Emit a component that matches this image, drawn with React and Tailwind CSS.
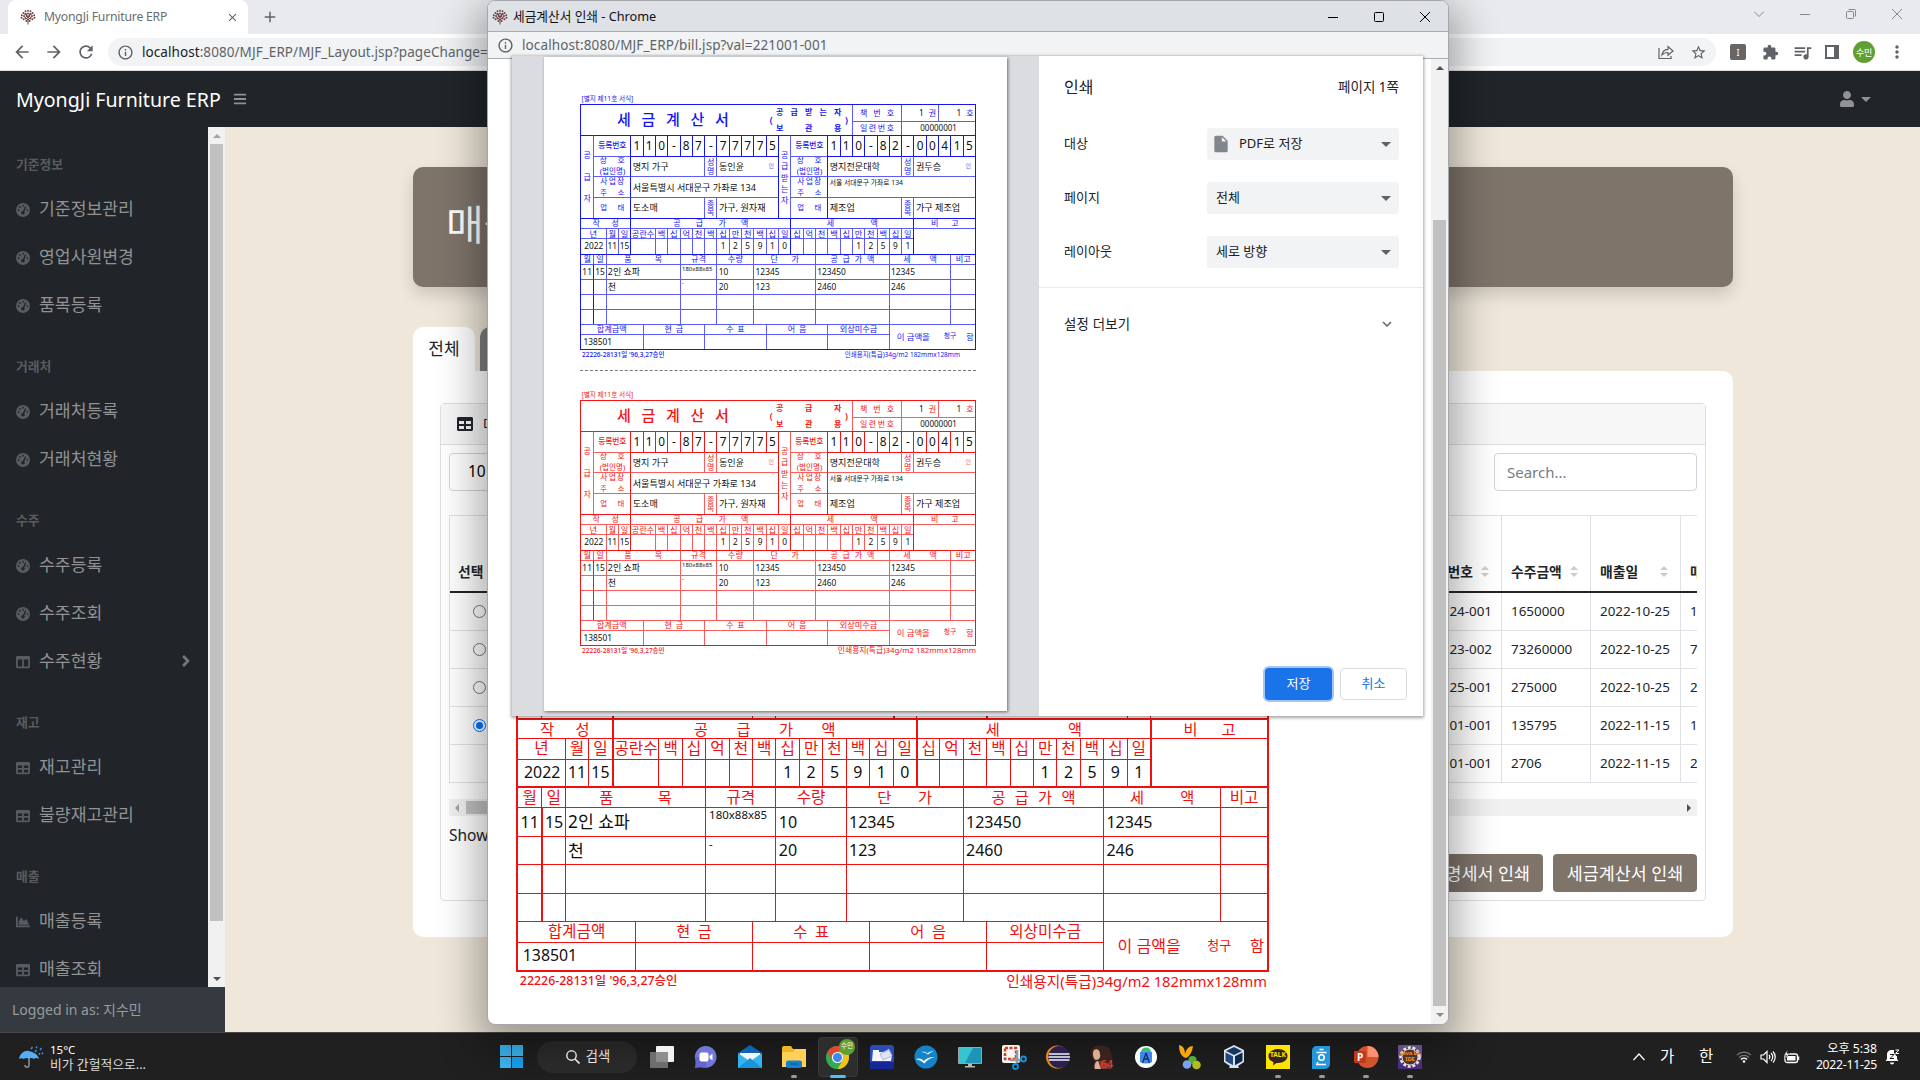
import React from "react";
import { FaBars, FaChartArea, FaColumns, FaTable, FaUser, FaAngleRight } from "react-icons/fa";
import { FaGaugeHigh } from "react-icons/fa6";
import { MdExtension, MdMoreVert, MdQueueMusic, MdStarBorder, MdArrowBack, MdArrowForward, MdRefresh, MdInfoOutline, MdClose, MdAdd, MdInsertDriveFile, MdExpandMore } from "react-icons/md";

const FONT = "font-['Noto_Sans','Noto_Sans_CJK_KR',sans-serif]";

/* ---------- tax invoice form ---------- */

// Relative row heights of the form; columns are 32 units, each split in halves.
const PRINT_ROWS = [1.6, 1.4, 2.1, 2.1, 2.1, 2.07, 1.03, 1.05, 1.55, 1.03, 1.5, 1.5, 1.51, 1.49, 1.04, 1.53];
const SCREEN_ROWS = [1.6, 1.4, 2.1, 2.1, 2.1, 2.02, 1.06, 1.06, 1.46, 1.1, 1.5, 1.5, 1.5, 1.5, 1.07, 1.47];

function Cell({ c, r, className = "", thickL, thickT, children }) {
  const line = [
    c[0] > 0 ? (thickL ? "[border-left-width:var(--thick)] border-l-current" : "border-l border-l-(--line)") : "",
    r[0] > 0 ? (thickT ? "[border-top-width:var(--thick)] border-t-current" : "border-t border-t-(--line)") : "",
  ].join(" ");
  return (
    <div
      className={`flex min-h-0 min-w-0 items-center overflow-hidden whitespace-nowrap ${line} ${className}`}
      style={{ gridColumn: `${c[0] * 2 + 1} / ${c[1] * 2 + 1}`, gridRow: `${r[0] + 1} / ${r[1] + 1}` }}
    >
      {children}
    </div>
  );
}

function Spread({ text, size = "text-[0.8em]", className = "" }) {
  return (
    <span className={`flex flex-1 justify-between leading-none ${size} ${className}`}>
      {[...text].map((ch, i) => (
        <span key={i}>{ch}</span>
      ))}
    </span>
  );
}

function Label({ text, size = "text-[0.82em]" }) {
  return <span className={`flex-1 text-center leading-none ${size}`}>{text}</span>;
}

function Val({ children, size = "text-[0.83em]", className = "" }) {
  return <span className={`leading-none text-[#111] ${size} ${className}`}>{children}</span>;
}

function Stack({ text, className = "" }) {
  return (
    <div className={`flex h-full flex-1 flex-col items-center justify-between ${className}`}>
      {[...text].map((ch, i) => (
        <span key={i} className="text-[0.8em] leading-none">{ch}</span>
      ))}
    </div>
  );
}

function Party({ x, side, digits, name, ceo, addr, smallAddr, biz, kind }) {
  return (
    <>
      <Cell c={[x, x + 1]} r={[2, 6]} thickT thickL>
        <Stack text={side} className={side.length === 3 ? "py-[1.55em]" : "pt-[1.55em] pb-[1.4em]"} />
      </Cell>
      <Cell c={[x + 1, x + 4]} r={[2, 3]} thickT>
        <Label text="등록번호" size="text-[0.77em] font-medium" />
      </Cell>
      {[...digits].map((d, i) => (
        <Cell key={i} c={[x + 4 + i, x + 5 + i]} r={[2, 3]} thickT thickL>
          <Val size="text-[1.18em]" className="flex-1 text-center">{d}</Val>
        </Cell>
      ))}
      <Cell c={[x + 1, x + 4]} r={[3, 4]} className="flex-col justify-center gap-[0.3em] px-[0.55em]">
        <div className="flex w-full"><Spread text="상호" size="text-[0.78em]" /></div>
        <div className="flex w-full"><Label text="(법인명)" size="text-[0.76em]" /></div>
      </Cell>
      <Cell c={[x + 4, x + 10]} r={[3, 4]} thickT thickL className="pl-[0.15em]"><Val size="text-[0.91em]">{name}</Val></Cell>
      <Cell c={[x + 10, x + 11]} r={[3, 4]} thickT><Stack text="성명" className="py-[0.15em]" /></Cell>
      <Cell c={[x + 11, x + 16]} r={[3, 4]} thickT className="justify-between pr-[0.4em] pl-[0.15em]">
        <Val size="text-[0.91em]">{ceo}</Val>
        <span className="text-[0.6em] leading-none opacity-70">인</span>
      </Cell>
      <Cell c={[x + 1, x + 4]} r={[4, 5]} className="flex-col justify-center gap-[0.3em] px-[0.6em]">
        <div className="flex w-full"><Spread text="사업장" size="text-[0.78em]" /></div>
        <div className="flex w-full"><Spread text="주소" size="text-[0.72em]" /></div>
      </Cell>
      <Cell c={[x + 4, x + 16]} r={[4, 5]} thickL className={smallAddr ? "items-start pt-[0.3em] pl-[0.15em]" : "pl-[0.15em]"}>
        <Val size={smallAddr ? "text-[0.68em]" : "text-[0.91em]"}>{addr}</Val>
      </Cell>
      <Cell c={[x + 1, x + 4]} r={[5, 6]} className="px-[0.6em]"><Spread text="업태" size="text-[0.74em]" /></Cell>
      <Cell c={[x + 4, x + 10]} r={[5, 6]} thickL className="pl-[0.15em]"><Val size="text-[0.91em]">{biz}</Val></Cell>
      <Cell c={[x + 10, x + 11]} r={[5, 6]}><Stack text="종목" className="py-[0.15em]" /></Cell>
      <Cell c={[x + 11, x + 16]} r={[5, 6]} className="pl-[0.15em]"><Val size="text-[0.91em]">{kind}</Val></Cell>
    </>
  );
}

const ITEMS = [
  ["11", "15", "2인 쇼파", "180x88x85", "10", "12345", "123450", "12345"],
  ["", "", "천", "-", "20", "123", "2460", "246"],
  ["", "", "", "", "", "", "", ""],
  ["", "", "", "", "", "", "", ""],
];
const ITEM_COLS = [[0, 1], [1, 2], [2, 8], [8, 11], [11, 14], [14, 19], [19, 25], [25, 30]];

function itemSize(col) {
  if (col === 3) return "text-[0.6em]";
  return col === 2 ? "text-[0.9em]" : "text-[0.84em]";
}

function Bill({ copy, className, rows = PRINT_ROWS, footRight = "text-[0.77em]" }) {
  const units1 = "백십억천백십만천백십일";
  const amount1 = "     125910";
  const units2 = "십억천백십만천백십일";
  const amount2 = "     12591";
  return (
    <div className={className}>
      <div className="flex h-[0.9em] items-center pl-[0.15em]"><span className="text-[0.66em] leading-none whitespace-pre">[별지 제11호 서식]</span></div>
      <div
        className="grid h-[24.6em] grid-cols-[repeat(64,minmax(0,1fr))] border-current [border-width:var(--thick)]"
        style={{ gridTemplateRows: rows.map((h) => `minmax(0, ${h}fr)`).join(" ") }}
      >
        <Cell c={[0, 15]} r={[0, 2]} className="pr-[3.7em] pl-[3.6em]"><Spread text="세금계산서" size="text-[1.5em] font-medium" /></Cell>
        <Cell c={[15, 22]} r={[0, 2]} className="gap-[0.35em] border-l-0 pr-[0.4em] pl-[0.4em] font-semibold">
          <span className="text-[0.9em]">(</span>
          <div className="flex flex-1 flex-col gap-[0.75em]">
            <div className="flex"><Spread text={copy} size="text-[0.8em]" /></div>
            <div className="flex"><Spread text="보관용" size="text-[0.8em]" /></div>
          </div>
          <span className="text-[0.9em]">)</span>
        </Cell>
        <Cell c={[22, 26]} r={[0, 1]} className="px-[0.7em]"><Spread text="책번호" size="text-[0.8em]" /></Cell>
        <Cell c={[26, 29]} r={[0, 1]} className="justify-end gap-[0.5em] pr-[0.2em]"><Val>1</Val><span className="text-[0.8em]">권</span></Cell>
        <Cell c={[29, 32]} r={[0, 1]} className="justify-end gap-[0.5em] pr-[0.15em]"><Val>1</Val><span className="text-[0.8em]">호</span></Cell>
        <Cell c={[22, 26]} r={[1, 2]} className="px-[0.7em]"><Spread text="일련번호" size="text-[0.8em]" /></Cell>
        <Cell c={[26, 32]} r={[1, 2]}><Val size="text-[0.8em]" className="flex-1 text-center">00000001</Val></Cell>

        <Party x={0} side="공급자" digits="110-87-77775" name="명지 가구" ceo="동인윤" addr="서울특별시 서대문구 가좌로 134" biz="도소매" kind="가구, 원자재" />
        <Party x={16} side="공급받는자" digits="110-82-00415" name="명지전문대학" ceo="권두승" addr="서울 서대문구 가좌로 134" smallAddr biz="제조업" kind="가구 제조업" />

        <Cell c={[0, 4]} r={[6, 7]} thickT className="px-[1.15em]"><Spread text="작성" /></Cell>
        <Cell c={[4, 17]} r={[6, 7]} thickT thickL className="px-[4.2em]"><Spread text="공급가액" /></Cell>
        <Cell c={[17, 27]} r={[6, 7]} thickT thickL className="px-[3.55em]"><Spread text="세액" /></Cell>
        <Cell c={[27, 32]} r={[6, 7]} thickT thickL className="px-[1.65em]"><Spread text="비고" /></Cell>
        <Cell c={[0, 2]} r={[7, 8]}><Label text="년" /></Cell>
        <Cell c={[2, 3]} r={[7, 8]}><Label text="월" /></Cell>
        <Cell c={[3, 4]} r={[7, 8]}><Label text="일" /></Cell>
        <Cell c={[4, 6]} r={[7, 8]} thickL><Label text="공란수" /></Cell>
        <Cell c={[0, 2]} r={[8, 9]}><Val className="flex-1 pl-[0.1em] text-center">2022</Val></Cell>
        <Cell c={[2, 3]} r={[8, 9]}><Val className="flex-1 text-center">11</Val></Cell>
        <Cell c={[3, 4]} r={[8, 9]}><Val className="flex-1 text-center">15</Val></Cell>
        <Cell c={[4, 6]} r={[8, 9]} thickL />
        {[...units1].map((u, i) => (
          <React.Fragment key={i}>
            <Cell c={[6 + i, 7 + i]} r={[7, 8]}><Label text={u} /></Cell>
            <Cell c={[6 + i, 7 + i]} r={[8, 9]}><Val className="flex-1 text-center">{amount1[i]}</Val></Cell>
          </React.Fragment>
        ))}
        {[...units2].map((u, i) => (
          <React.Fragment key={i}>
            <Cell c={[17 + i, 18 + i]} r={[7, 8]} thickL={i === 0}><Label text={u} /></Cell>
            <Cell c={[17 + i, 18 + i]} r={[8, 9]} thickL={i === 0}><Val className="flex-1 text-center">{amount2[i]}</Val></Cell>
          </React.Fragment>
        ))}
        <Cell c={[27, 32]} r={[7, 9]} thickL />

        <Cell c={[0, 1]} r={[9, 10]} thickT><Label text="월" /></Cell>
        <Cell c={[1, 2]} r={[9, 10]} thickT><Label text="일" /></Cell>
        <Cell c={[2, 8]} r={[9, 10]} thickT className="px-[1.75em]"><Spread text="품목" /></Cell>
        <Cell c={[8, 11]} r={[9, 10]} thickT><Label text="규격" /></Cell>
        <Cell c={[11, 14]} r={[9, 10]} thickT><Label text="수량" /></Cell>
        <Cell c={[14, 19]} r={[9, 10]} thickT className="px-[1.6em]"><Spread text="단가" /></Cell>
        <Cell c={[19, 25]} r={[9, 10]} thickT className="px-[1.45em]"><Spread text="공급가액" /></Cell>
        <Cell c={[25, 30]} r={[9, 10]} thickT className="px-[1.35em]"><Spread text="세액" /></Cell>
        <Cell c={[30, 32]} r={[9, 10]} thickT><Label text="비고" /></Cell>
        {ITEMS.map((item, ri) => (
          <React.Fragment key={ri}>
            {item.map((v, ci) => (
              <Cell
                key={ci}
                c={ITEM_COLS[ci]}
                r={[10 + ri, 11 + ri]}
                thickL={ci === 1}
                className={ci === 3 ? "items-start pt-[0.06em] pl-[0.15em]" : ci < 2 ? "justify-center" : "pl-[0.12em]"}
              >
                <Val size={itemSize(ci)}>{v}</Val>
              </Cell>
            ))}
            <Cell c={[30, 32]} r={[10 + ri, 11 + ri]} />
          </React.Fragment>
        ))}

        <Cell c={[0, 5]} r={[14, 15]}><Label text="합계금액" /></Cell>
        <Cell c={[5, 10]} r={[14, 15]} className="px-[2.1em]"><Spread text="현금" /></Cell>
        <Cell c={[10, 15]} r={[14, 15]} className="px-[2.1em]"><Spread text="수표" /></Cell>
        <Cell c={[15, 20]} r={[14, 15]} className="px-[2.1em]"><Spread text="어음" /></Cell>
        <Cell c={[20, 25]} r={[14, 15]}><Label text="외상미수금" /></Cell>
        <Cell c={[25, 32]} r={[14, 16]} className="justify-between pr-[0.15em] pl-[0.7em]">
          <span className="text-[0.84em] leading-none">이 금액을</span>
          <span className="pl-[0.6em] text-[0.68em] leading-none">청구</span>
          <span className="text-[0.8em] leading-none">함</span>
        </Cell>
        <Cell c={[0, 5]} r={[15, 16]} className="pl-[0.25em]"><Val>138501</Val></Cell>
        <Cell c={[5, 10]} r={[15, 16]} />
        <Cell c={[10, 15]} r={[15, 16]} />
        <Cell c={[15, 20]} r={[15, 16]} />
        <Cell c={[20, 25]} r={[15, 16]} />
      </div>
      <div className="flex h-[1em] items-center justify-between pl-[0.2em] whitespace-nowrap">
        <span className="text-[0.65em] leading-none font-medium">22226-28131일 '96,3,27승인</span>
        <span className={`leading-none ${footRight}`}>인쇄용지(특급)34g/m2 182mmx128mm</span>
      </div>
    </div>
  );
}

/* ---------- small pieces ---------- */

function Tree() {
  return (
    <svg viewBox="0 0 16 16" className="h-4 w-4 shrink-0">
      <path d="M8 15.500V8M8 11 4 7.500M8 11l4-3.500M8 9 6 4M8 9l2.200-5" stroke="#6b4242" strokeWidth="1" fill="none" />
      <g fill="#6b3e40">
        {[[8, 1.8], [5.500, 2.200], [10.500, 2.200], [3.400, 4], [12.600, 4], [1.800, 6.300], [14.200, 6.300], [1.600, 8.800], [14.400, 8.800], [3.600, 10.300], [12.400, 10.300], [5.200, 5], [10.800, 5], [8, 4.500], [4, 7], [12, 7], [6.500, 7], [9.500, 7], [5.600, 9.400], [10.400, 9.400], [6.400, 12], [9.600, 12]].map(([x, y], i) => (
          <circle key={i} cx={x} cy={y} r="0.950" />
        ))}
      </g>
    </svg>
  );
}

function Tri({ dir, className = "" }) {
  const d = { up: "M4 2 8 6H0Z", down: "M0 2h8L4 6Z", left: "M2 4 6 0v8Z", right: "M6 4 2 0v8Z" }[dir];
  return <svg viewBox="0 0 8 8" className={`h-2 w-2 ${className}`}><path d={d} fill="currentColor" /></svg>;
}

const NAV = [
  ["기준정보", [[FaGaugeHigh, "기준정보관리"], [FaGaugeHigh, "영업사원변경"], [FaGaugeHigh, "품목등록"]]],
  ["거래처", [[FaGaugeHigh, "거래처등록"], [FaGaugeHigh, "거래처현황"]]],
  ["수주", [[FaGaugeHigh, "수주등록"], [FaGaugeHigh, "수주조회"], [FaColumns, "수주현황", true]]],
  ["재고", [[FaTable, "재고관리"], [FaTable, "불량재고관리"]]],
  ["매출", [[FaChartArea, "매출등록"], [FaTable, "매출조회"]]],
];

function Sidebar() {
  return (
    <aside className="flex w-[225px] shrink-0 flex-col bg-[#212529]">
      <div className="flex h-[860px]">
        <nav className="w-[208px] overflow-hidden">
          {NAV.map(([head, items]) => (
            <div key={head}>
              <div className="flex h-[58px] items-end px-4 pb-3 text-[12.800px] leading-[18px] font-bold text-[#595c5f]">{head}</div>
              {items.map(([Icon, label, more]) => (
                <div key={label} className="flex h-12 items-center pr-[13px] pl-4 text-[17.200px] text-[#909294]">
                  <Icon className="mt-0.5 mr-[9px] h-[14px] w-[14px] text-[#595c5f]" />
                  <span className="flex-1">{label}</span>
                  {more && <FaAngleRight className="h-[18px] w-[18px] text-[#74777a]" />}
                </div>
              ))}
            </div>
          ))}
        </nav>
        <div className="flex w-[17px] flex-col items-center bg-[#f1f1f1] text-[#a3a3a3]">
          <div className="flex h-[17px] items-center"><Tri dir="up" /></div>
          <div className="h-[777px] w-[13px] bg-[#c1c1c1]" />
          <div className="mt-auto flex h-[17px] items-center text-[#505050]"><Tri dir="down" /></div>
        </div>
      </div>
      <div className="flex flex-1 items-center bg-[#343a40] pl-3 text-[14px] text-[#999c9f]">Logged in as: 지수민</div>
    </aside>
  );
}

const ROWS_DATA = [
  ["24-001", "1650000", "2022-10-25", "1650000"],
  ["23-002", "73260000", "2022-10-25", "73260000"],
  ["25-001", "275000", "2022-10-25", "275000"],
  ["01-001", "135795", "2022-11-15", "135795"],
  ["01-001", "2706", "2022-11-15", "2706"],
];

function Sorter() {
  return (
    <span className="flex flex-col gap-[3px] text-[#ccc]">
      <svg viewBox="0 0 8 4" className="h-1 w-2"><path d="M4 0 8 4H0Z" fill="currentColor" /></svg>
      <svg viewBox="0 0 8 4" className="h-1 w-2"><path d="M0 0h8L4 4Z" fill="currentColor" /></svg>
    </span>
  );
}

function DataTable() {
  const cols = "grid grid-cols-[120px_932px_89px_90px_90px]";
  return (
    <div className="w-[1248px] overflow-hidden">
      <div className="w-[1322px] border-t border-l border-[#dee2e6] text-[13.400px] text-[#212529]">
        <div className={`${cols} h-[77px] border-b-2 border-[#212529] text-[13.800px] font-semibold`}>
          <div className="flex items-end border-r border-[#dee2e6] pb-2 pl-2">선택</div>
          <div className="flex items-end justify-end gap-2 border-r border-[#dee2e6] pr-3 pb-2">수주번호<span className="pb-1.5"><Sorter /></span></div>
          {["수주금액", "매출일", "매출금액"].map((t) => (
            <div key={t} className="flex items-end justify-between border-r border-[#dee2e6] pr-3 pb-2 pl-[9px]">{t}<span className="pb-1.5"><Sorter /></span></div>
          ))}
        </div>
        {ROWS_DATA.map((row, i) => (
          <div key={i} className={`${cols} h-[38px] border-b border-[#dee2e6]`}>
            <div className="flex items-center border-r border-[#dee2e6] pl-[23px]">
              {i < 4 && (
                <span className={`flex h-[13px] w-[13px] items-center justify-center rounded-full border ${i === 3 ? "border-[#0075ff]" : "border-[#767676]"}`}>
                  {i === 3 && <span className="h-[7px] w-[7px] rounded-full bg-[#0075ff]" />}
                </span>
              )}
            </div>
            <div className="flex items-center justify-end border-r border-[#dee2e6] pr-[9px]">{row[0]}</div>
            {row.slice(1).map((v, j) => (
              <div key={j} className="flex items-center border-r border-[#dee2e6] pl-[9px]">{v}</div>
            ))}
          </div>
        ))}
      </div>
    </div>
  );
}

function MainContent() {
  return (
    <main className="flex-1 bg-[#efe7da] pt-10 pl-[188px]">
      <div className="flex h-[120px] w-[1320px] items-center rounded-[10px] bg-[#7e746a] pb-1 pl-[33px] text-[41px] text-white shadow-[0_8px_16px_rgba(0,0,0,0.15)]">매출조회</div>
      <div className="mt-10 flex h-11 gap-[5px]">
        <div className="flex w-[62px] items-center justify-center rounded-t-[10px] bg-white text-[17px] text-[#212529]">전체</div>
        <div className="w-[90px] rounded-t-[10px] bg-[#7f7f7f]" />
      </div>
      <div className="h-[566px] w-[1320px] rounded-[10px] rounded-tl-none bg-white px-[27px] pt-8">
        <div className="flex h-[498px] flex-col rounded-[4px] border border-[#dfdfdf]">
          <div className="flex h-[41px] items-center gap-2.5 border-b border-[#dfdfdf] bg-[#f7f7f7] pl-4 text-[15px] text-[#212529]"><FaTable className="h-4 w-4" />매출조회</div>
          <div className="flex-1 px-2 pt-2">
            <div className="flex justify-between">
              <div className="flex h-[38px] w-[70px] items-center rounded-[4px] border border-[#ced4da] pl-[18px] text-[15.500px]">10</div>
              <div className="flex h-[38px] w-[203px] items-center rounded-[4px] border border-[#ced4da] pl-3 text-[15px] text-[#757c83]">Search...</div>
            </div>
            <div className="mt-6"><DataTable /></div>
            <div className="mt-4 flex h-[17px] items-center justify-between bg-[#f1f1f1] px-1">
              <Tri dir="left" className="text-[#a3a3a3]" />
              <div className="mr-auto ml-[5px] h-[13px] w-[700px] bg-[#c1c1c1]" />
              <Tri dir="right" className="text-[#505050]" />
            </div>
            <div className="mt-2 text-[15.500px] text-[#212529]">Showing 1 to 5 of 5 entries</div>
            <div className="mt-[7px] flex justify-end gap-2.5 text-[17.400px] text-white">
              <div className="flex h-[38px] w-[150px] items-center justify-end rounded-[4px] bg-[#7e746a] pr-[13px] whitespace-nowrap">거래명세서 인쇄</div>
              <div className="flex h-[38px] w-[144px] items-center justify-center rounded-[4px] bg-[#7e746a] whitespace-nowrap">세금계산서 인쇄</div>
            </div>
          </div>
        </div>
      </div>
    </main>
  );
}

function BrowserChrome() {
  return (
    <>
      <div className="flex h-[34px] bg-[#e8eaed] pl-2">
        <div className="flex w-[240px] items-center rounded-t-lg bg-white pr-[9px] pl-3 text-[12.200px] text-[#6a6d71]">
          <Tree />
          <span className="ml-2 flex-1 tracking-[-0.2px]">MyongJi Furniture ERP</span>
          <MdClose className="h-[13px] w-[13px] text-[#5f6368]" />
        </div>
        <MdAdd className="mt-2 ml-[13px] h-[18px] w-[18px] text-[#5f6368]" />
        <div className="mt-[9px] ml-auto flex items-start gap-9 pr-[18px] text-[#85878a]">
          <svg viewBox="0 0 10 10" className="h-2.5 w-2.5"><path d="m0 2.500 5 5 5-5" fill="none" stroke="currentColor" /></svg>
          <svg viewBox="0 0 10 10" className="h-2.5 w-2.5"><path d="M0 5.500h10" stroke="currentColor" /></svg>
          <svg viewBox="0 0 10 10" className="h-2.5 w-2.5"><rect x="0.500" y="2.500" width="7" height="7" rx="1" fill="none" stroke="currentColor" /><path d="M2.500.5H8.500a1 1 0 0 1 1 1v6" fill="none" stroke="currentColor" /></svg>
          <svg viewBox="0 0 10 10" className="h-2.5 w-2.5"><path d="m0 0 10 10M10 0 0 10" stroke="currentColor" /></svg>
        </div>
      </div>
      <div className="flex h-[37px] items-center border-b border-[#dadce0] bg-white pl-3 text-[#5f6368]">
        <MdArrowBack className="h-5 w-5" />
        <MdArrowForward className="ml-3 h-5 w-5" />
        <MdRefresh className="ml-3 h-5 w-5" />
        <div className="ml-3 flex h-7 w-[1608px] items-center rounded-full bg-[#f1f3f4] pr-[9px] pl-[9px]">
          <MdInfoOutline className="h-[17px] w-[17px]" />
          <span className="ml-2 flex-1 text-[13.500px] tracking-[0.07px]"><span className="text-[#202124]">localhost</span>:8080/MJF_ERP/MJF_Layout.jsp?pageChange=</span>
          <svg viewBox="0 0 16 16" className="h-4 w-4"><path d="M1 4v10.500h12V12M4 11c.3-4 2.500-5.500 6-5.700V2.500L15 7l-5 4.200V8.500C7.500 8.500 5.500 9 4 11Z" fill="none" stroke="currentColor" strokeWidth="1.200" /></svg>
          <MdStarBorder className="ml-4 h-[17px] w-[17px]" />
        </div>
        <div className="ml-3.5 flex h-4 w-4 items-center justify-center rounded-[2px] bg-[#666] text-[9px] leading-none text-white">I</div>
        <MdExtension className="ml-4 h-[17px] w-[17px]" />
        <MdQueueMusic className="ml-[13px] h-[21px] w-[21px]" />
        <svg viewBox="0 0 14 14" className="ml-3 h-3.5 w-3.5"><path d="M0 0h14v14H0zM2 2v10h7V2z" fill="currentColor" fillRule="evenodd" /></svg>
        <div className="ml-3.5 flex h-[22px] w-[22px] items-center justify-center rounded-full bg-[#5f9f36] text-[9px] leading-none tracking-[-0.300px] text-white">수민</div>
        <MdMoreVert className="ml-3 h-5 w-5" />
      </div>
    </>
  );
}

/* ---------- print popup ---------- */

function Select({ label, value, icon }) {
  return (
    <div className="flex h-8 items-center justify-between">
      <span>{label}</span>
      <div className="flex h-8 w-[192px] items-center rounded-[3px] bg-[#f1f3f4] pr-[3px] pl-[9px]">
        {icon && <MdInsertDriveFile className="mr-2 -ml-[5px] h-5 w-5 text-[#80868b]" />}
        <span className="flex-1">{value}</span>
        <svg viewBox="0 0 10 5" className="mr-[5px] h-[5px] w-2.5 text-[#5f6368]"><path d="M0 0h10L5 5Z" fill="currentColor" /></svg>
      </div>
    </div>
  );
}

function PrintDialog() {
  return (
    <div className="absolute top-[55px] left-6 flex h-[660px] w-[911px] bg-white shadow-[0_1px_3px_1px_rgba(0,0,0,0.35)]">
      <div className="w-[527px] bg-[#dadce0] pt-px pl-8">
        <div className="h-[654px] w-[463px] bg-white pt-[38px] pl-9 shadow-[1px_1px_3px_rgba(0,0,0,0.5)]">
          <Bill copy="공급받는자" className="w-[396px] text-[10px] text-[#1414f5] [--line:#5c5cfb] [--thick:1px]" footRight="pr-4 text-[0.65em]" />
          <div className="mt-[10px] mb-[20px] w-[396px] border-t border-dashed border-[#777]" />
          <Bill copy="공급자" className="w-[396px] text-[10px] text-[#f51414] [--line:#fb5c5c] [--thick:1px]" footRight="text-[0.78em]" />
        </div>
      </div>
      <div className="flex w-96 flex-col text-[13px] text-[#202124]">
        <div className="flex h-[61px] items-center justify-between pt-px pr-6 pl-[25px]">
          <span className="text-[16px]">인쇄</span>
          <span className="text-[13.500px]">페이지 1쪽</span>
        </div>
        <div className="flex flex-col gap-[22px] border-b border-[#e8eaed] pt-[11px] pr-6 pb-[19px] pl-[25px]">
          <Select label="대상" value="PDF로 저장" icon />
          <Select label="페이지" value="전체" />
          <Select label="레이아웃" value="세로 방향" />
        </div>
        <div className="flex h-[72px] items-center justify-between pr-[27px] pl-[25px]">
          <span className="text-[13.400px] tracking-[0.2px]">설정 더보기</span>
          <MdExpandMore className="h-[18px] w-[18px] text-[#5f6368]" />
        </div>
        <div className="mt-auto flex justify-end gap-2 pr-4 pb-4">
          <div className="flex h-8 w-[67px] items-center justify-center rounded-[4px] bg-[#1a73e8] text-white ring-2 ring-[#a3c7f6]">저장</div>
          <div className="flex h-8 w-[67px] items-center justify-center rounded-[4px] border border-[#dadce0] text-[#1a73e8]">취소</div>
        </div>
      </div>
    </div>
  );
}

function Popup() {
  return (
    <div className="absolute top-0 left-[487px] flex h-[1025px] w-[962px] flex-col overflow-hidden rounded-lg border border-[#a5a7aa] bg-white shadow-[0_16px_40px_10px_rgba(0,0,0,0.33)]">
      <div className="flex h-[31px] shrink-0 items-center border-b border-[#a9acb0] bg-[#dee1e6] pt-px pr-[18px] pl-1 text-[12.700px] text-[#111]">
        <Tree />
        <span className="ml-[5px] flex-1">세금계산서 인쇄 - Chrome</span>
        <div className="flex gap-9 text-black">
          <svg viewBox="0 0 10 10" className="h-2.5 w-2.5"><path d="M0 5.500h10" stroke="currentColor" /></svg>
          <svg viewBox="0 0 10 10" className="h-2.5 w-2.5"><rect x="0.500" y="0.500" width="9" height="9" rx="1" fill="none" stroke="currentColor" /></svg>
          <svg viewBox="0 0 10 10" className="h-2.5 w-2.5"><path d="m0 0 10 10M10 0 0 10" stroke="currentColor" /></svg>
        </div>
      </div>
      <div className="flex h-[27px] shrink-0 items-center border-b border-[#a9acb0] bg-[#f1f3f4] pl-[9px] text-[13.500px] text-[#5f6368]">
        <MdInfoOutline className="h-[17px] w-[17px]" />
        <span className="ml-2 tracking-[0.11px]">localhost:8080/MJF_ERP/bill.jsp?val=221001-001</span>
      </div>
      <div className="flex min-h-0 flex-1 justify-between">
        <div className="overflow-hidden pt-[425px] pl-7">
          <Bill copy="공급자" rows={SCREEN_ROWS} className="w-[753px] text-[19.120px] text-[#f01010] [--line:#f01010] [--thick:2px]" footRight="pr-0.5 text-[0.77em]" />
        </div>
        <div className="flex w-[17px] flex-col items-center bg-[#f1f1f1] text-[#505050]">
          <div className="flex h-[18px] items-center"><Tri dir="up" /></div>
          <div className="mt-[143px] h-[787px] w-[13px] bg-[#c1c1c1]" />
          <div className="mt-auto flex h-[18px] items-center text-[#8a8a8a]"><Tri dir="down" /></div>
        </div>
      </div>
      <PrintDialog />
    </div>
  );
}

/* ---------- taskbar ---------- */

const APPS = [
  ["taskview", <><rect x="6" y="1" width="18" height="16" rx="1" fill="#f2f2f2" /><path d="M0 7h18v16H1a1 1 0 0 1-1-1z" fill="#7c7c7c" fillOpacity=".85" /></>],
  ["chat", <><path d="M12 1a11 11 0 1 1-5 21l-6 1 1-6A11 11 0 0 1 12 1Z" fill="#7078d8" /><path d="M1 23V12h11v11z" fill="#5b4fc8" opacity=".5" /><rect x="5.500" y="7.500" width="9" height="9" rx="2" fill="#fff" /><path d="m15.500 11 3-2.500v7l-3-2.500z" fill="#fff" /></>],
  ["mail", <><path d="M0 8 12 0l12 8v4H0z" fill="#0f63b5" /><path d="M2 8h20v8H2z" fill="#f4f4f4" /><path d="M0 8l12 8.500L24 8v15H0z" fill="#33b4f0" /><path d="M0 23 12 13l12 10z" fill="#1c93dc" /></>],
  ["explorer", <><path d="M0 3a2 2 0 0 1 2-2h7l2 3h13v18H0z" fill="#f0b429" /><path d="M0 7h11l2-3h11v18H0z" fill="#ffd257" /><rect x="4" y="15.500" width="16" height="7.500" rx="2" fill="#1680cf" /><path d="M8 19h8" stroke="#0b5c9e" strokeWidth="1.500" /></>, "#999"],
  ["chrome", <><circle cx="11.500" cy="12.500" r="11.500" fill="#34a853" /><path d="M11.500 1a11.500 11.500 0 0 1 10 5.800H11.500A5.700 5.700 0 0 0 6.600 15.500L1.600 6.800A11.500 11.500 0 0 1 11.500 1Z" fill="#ea4335" /><path d="M21.500 6.800a11.500 11.500 0 0 1-10 17.200l5-8.600a5.700 5.700 0 0 0-5-8.600z" fill="#fbc116" /><circle cx="11.500" cy="12.500" r="5.600" fill="#fff" /><circle cx="11.500" cy="12.500" r="4.500" fill="#4285f4" /></>, "#4cc2ff"],
  ["note", <><rect width="24" height="24" rx="3" fill="#2b4bb8" /><path d="M0 17h24v4a3 3 0 0 1-3 3H3a3 3 0 0 1-3-3z" fill="#14279b" /><path d="M3 5h6v2h4l6-3 3 6-1 6H2z" fill="#f4f4fa" /><path d="m10 9 9-4 3 6-9 4z" fill="#dfe4f8" stroke="#8fa0d6" strokeWidth=".7" /></>],
  ["openoffice", <><circle cx="12" cy="12" r="11.500" fill="#1583c8" /><path d="M7 7c2.500-.8 5-.3 6.500 1.500C15 6.500 17 6 20 6.800c-2.500.3-4.500 1-6 3-2-2-4-2.500-7-2.800ZM1.500 14c3.500-1 6-.7 8.500 2 3-3.500 6.500-4.300 11-3.500-4.500.5-7.500 2-10.500 6C8 16 5 15 1.500 14Z" fill="#fff" /></>],
  ["remote", <><rect y="2" width="24" height="17" rx="1" fill="#9aa4aa" /><rect x="1" y="3" width="22" height="15" fill="#1d95b4" /><path d="M1 3h14L7 18H1z" fill="#35c4d0" /><path d="M10 19h4v2h3v1.500H7V21h3z" fill="#b8b8b8" /></>],
  ["snip", <><rect width="18" height="18" rx="2" fill="#f5f5f5" /><rect x="3" y="3" width="11" height="11" fill="none" stroke="#d63e14" strokeWidth="2.500" strokeDasharray="3 1.500" /><path d="M15 5v13M8 15h12" stroke="#8e9aa4" strokeWidth="2.500" /><circle cx="21.500" cy="14" r="2.500" fill="none" stroke="#1292d8" strokeWidth="1.800" /><circle cx="13.500" cy="21.500" r="2.500" fill="none" stroke="#1292d8" strokeWidth="1.800" /></>],
  ["eclipse", <><circle cx="11.500" cy="12" r="11.500" fill="#e88b1a" /><circle cx="13.200" cy="12" r="11" fill="#2b2150" /><path d="M3 9h20.500M2.500 12h21.500M3 15h20.500" stroke="#f3f1f8" strokeWidth="1.500" /></>],
  ["portrait", <><path d="M1 9C0 2 7-1 13 1c6 0 8 4 8 8 3 4 1 9-3 10L4 17z" fill="#3a2220" /><path d="M4 5c3-2 6 0 6 4 1 3-1 6-4 6-3-1-4-7-2-10Z" fill="#dcae90" /><path d="M4 24c-1-6 2-9 7-8 6 0 10 4 10 8z" fill="#70382c" /><path d="M5 24c-1-5 1-8 3-8l3 8z" fill="#d8b39b" /></>, null, "64"],
  ["android", <><circle cx="12" cy="12" r="11" fill="#fff" /><path d="M7 7a5 4.500 0 0 1 10 0z" fill="#3bbf78" /><path d="M6 7h12v10c-4 2-8 2-12 0z" fill="#3f86ef" /><path d="m12 8-3.500 10M12 8l3.500 10M9.500 14h5" stroke="#12345c" strokeWidth="1.300" fill="none" /></>],
  ["msn", <><path d="M1 0c5 1 6 5 6 9 1-5 4-8 8-8-1 6-3 10-7 12C4 12 1 8 1 0Z" fill="#f8a512" /><circle cx="14.500" cy="15" r="4" fill="#57ac35" /><circle cx="9" cy="19.500" r="4.300" fill="#7ba3ee" /><circle cx="18.500" cy="20" r="4.300" fill="#b4bb1c" /></>],
  ["vbox", <><path d="m12 0 10 5v12l-6 4 1 2H7l1-2-6-4V5z" fill="#dbe4ee" /><path d="m12 2 8 4-8 4-8-4z" fill="#16375f" /><path d="M3.500 7.500 11 11.300v9L3.500 16z" fill="#214b7e" /><path d="M20.500 7.500 13 11.300v9l7.500-4.300z" fill="#0d2848" /></>],
  ["kakao", <><rect width="24" height="24" fill="#fde500" /><path d="M12 4c5.500 0 9.500 3.200 9.500 7s-4 7-9.500 7h-1.500L7 20.500l.5-3.200C4.500 16 2.500 13.800 2.500 11c0-3.800 4-7 9.500-7Z" fill="#3b2023" /></>, "#999", "TALK"],
  ["hangul", <><path d="M6 1h14v18a5 5 0 0 1-5 5H2V6a5 5 0 0 1 4-5Z" fill="#2596da" /><path d="M9.500 4.500h4M6.500 7.500h10M6 19.500h10M7.500 17v3" stroke="#fff" strokeWidth="1.600" /><circle cx="11.500" cy="12.500" r="2.700" fill="none" stroke="#fff" strokeWidth="1.600" /></>, "#999"],
  ["ppt", <><circle cx="13.500" cy="12" r="11" fill="#d4532f" /><path d="M13.500 1a11 11 0 0 1 11 11h-11z" fill="#fb9172" /><rect y="6" width="12" height="12" rx="1" fill="#c1381a" /></>, "#999", "P"],
  ["javaee", <><rect width="24" height="24" rx="1" fill="#66508a" /><path d="M0 12h24v12H0z" fill="#4b2c7d" /><circle cx="12" cy="12" r="9.500" fill="#4a3030" stroke="#e8e8e8" strokeWidth="2.500" strokeDasharray="3 1.700" /><circle cx="12" cy="12" r="8" fill="#4b3434" stroke="#d8d8d8" /></>, "#999", "Java EE IDE"],
];

const BADGE = {
  "64": "right-[1px] bottom-0 text-[11px] font-semibold text-[#e8392e]",
  TALK: "top-[7.500px] left-[4px] text-[6.500px] font-bold text-[#fde500]",
  P: "top-[7px] left-[3px] text-[10px] font-bold text-white",
};

function Badge({ text }) {
  if (text === "Java EE IDE") {
    return (
      <span className="absolute inset-x-0 top-[5px] flex flex-col items-center text-[6px] leading-[6.500px] font-bold tracking-[-0.2px] whitespace-nowrap text-[#ff8a1c]">
        <span>Java EE</span>
        <span>IDE</span>
      </span>
    );
  }
  return <span className={`absolute leading-none whitespace-nowrap ${BADGE[text]}`}>{text}</span>;
}

function Taskbar() {
  return (
    <div className="flex h-12 shrink-0 items-center border-t border-[#4a4a4a] bg-[#202020] text-white">
      <div className="flex w-[489px] items-center pl-[18px]">
        <svg viewBox="0 0 26 24" className="h-6 w-[26px]">
          <path d="M1 14C2 8 7 5 11 6s9 3 10 8c-2-1.500-4-1.500-5 0-2-1.500-4-1.500-5 0-2-1.500-4-1.500-5 0-2-1-3.500-1-5 0Z" fill="#56aef5" />
          <path d="M11 13v7c0 3-4 3-4 0" fill="none" stroke="#8c8c8c" strokeWidth="1.600" />
          <path d="m13 4 1.500-2M18 3l1-1.500M17 7l1.500-2M22 5l1.500-2M21 9.500l1-1.500M24 9l1-1.500" stroke="#3c8be0" strokeWidth="1.500" />
        </svg>
        <div className="ml-1.5 text-[12px] leading-[15px]">
          <div className="text-[11.500px]">15°C</div>
          <div className="text-[12.800px] text-[#ddd]">비가 간헐적으로...</div>
        </div>
      </div>
      <div className="flex w-[44px] justify-center">
        <svg viewBox="0 0 23 23" className="h-[23px] w-[23px]"><path d="M0 0h11v11H0zM12 0h11v11H12zM0 12h11v11H0zM12 12h11v11H12z" fill="#3cbcf8" /><path d="M12 12h11v11H12z" fill="#1ba4f5" /></svg>
      </div>
      <div className="mr-[3px] ml-1 flex h-8 w-[100px] items-center justify-center gap-1.5 rounded-full bg-[#2d2d2d] pl-0.5 text-[13.300px]">
        <svg viewBox="0 0 14 14" className="h-3.5 w-3.5"><circle cx="5.500" cy="5.500" r="4.700" fill="none" stroke="#fff" strokeWidth="1.500" /><path d="m9 9 4.500 4.500" stroke="#fff" strokeWidth="1.700" /></svg>
        검색
      </div>
      {APPS.map(([name, art, dot, badge]) => (
        <div key={name} className="relative flex h-12 w-[44px] shrink-0 items-center justify-center">
          {name === "chrome" && <div className="absolute inset-x-0.5 top-1 bottom-1 rounded-[4px] border border-[#3a3a3a] bg-[#2d2d2d]" />}
          <div className="relative h-6 w-6">
            <svg viewBox="0 0 24 24" className="h-6 w-6 overflow-visible">{art}</svg>
            {badge && <Badge text={badge} />}
            {name === "chrome" && <span className="absolute -top-[6px] -right-[5px] flex h-4 w-4 items-center justify-center rounded-full bg-[#5f9f36] text-[6.500px] leading-none">수민</span>}
          </div>
          {dot && <span className={`absolute bottom-[3px] h-[3px] rounded-full ${name === "chrome" ? "w-4 bg-[#4cc2ff]" : "w-1.5 bg-[#999]"}`} />}
        </div>
      ))}
      <div className="ml-auto flex items-center pr-[20px]">
        <svg viewBox="0 0 12 8" className="h-2 w-3"><path d="m.5 7 5.500-6 5.500 6" fill="none" stroke="#fff" strokeWidth="1.200" /></svg>
        <span className="ml-[15px] w-4 text-[15.500px] leading-none">가</span>
        <span className="ml-[23px] w-4 text-[15.500px] leading-none">한</span>
        <svg viewBox="0 0 16 13" className="ml-[21px] h-[13px] w-4"><path d="M1 5a10 10 0 0 1 14 0M3 7.500a7 7 0 0 1 10 0" fill="none" stroke="#777" strokeWidth="1.200" /><path d="M5 9.500a4.300 4.300 0 0 1 6 0" fill="none" stroke="#fff" strokeWidth="1.500" /><circle cx="8" cy="11.500" r="1.300" fill="#fff" /></svg>
        <svg viewBox="0 0 16 14" className="ml-2 h-3.5 w-4" fill="none" stroke="#fff" strokeWidth="1.200"><path d="M1 5h2.500L7 1.500v11L3.500 9H1zM9 5a3 3 0 0 1 0 4M11 3a5.500 5.500 0 0 1 0 8M13 1.500a8 8 0 0 1 0 11" /></svg>
        <svg viewBox="0 0 16 14" className="ml-2 h-3.5 w-4"><rect x="1" y="4" width="12.500" height="8.500" rx="2" fill="none" stroke="#fff" strokeWidth="1.300" /><rect x="3" y="6" width="8.500" height="4.500" fill="#fff" /><path d="M14.500 6.500v3.500" stroke="#fff" strokeWidth="1.500" /><path d="M3.500 0 0 5h2.500L1.500 9 5.500 3.500H3z" fill="#fff" stroke="#202020" strokeWidth=".5" /></svg>
        <div className="mr-0.5 ml-[11px] flex w-[66px] flex-col items-end text-[12.200px] leading-4 whitespace-nowrap"><div>오후 5:38</div><div className="tracking-[-0.250px]">2022-11-25</div></div>
        <svg viewBox="0 0 15 16" className="ml-1.5 h-4 w-[15px]"><path d="M7 1a5 5 0 0 0-5 5v4L.5 12h13L12 10V8M5 13.500a2 2 0 0 0 4 0z" fill="#fff" /><path d="M7 1C4 1 2 3 2 6v6h10V7H9V1z" fill="#fff" /><path d="M5 5.500h4L5 9.500h4" fill="none" stroke="#202020" strokeWidth="1" /><path d="M10.500 1H14l-3.500 3.500H14" fill="none" stroke="#fff" strokeWidth="1" /></svg>
      </div>
    </div>
  );
}

export default function App() {
  return (
    <div className={`relative flex h-[1080px] w-[1920px] flex-col overflow-hidden ${FONT}`}>
      <div className="flex h-[1032px] shrink-0 flex-col">
        <BrowserChrome />
        <header className="flex h-14 shrink-0 items-center bg-[#212529] pr-[49px] pl-4 text-[#909294]">
          <span className="pt-0.5 text-[19.600px] text-white">MyongJi Furniture ERP</span>
          <FaBars className="ml-3 h-3.5 w-3.5" />
          <FaUser className="ml-auto h-4 w-3.5" />
          <svg viewBox="0 0 10 5" className="ml-[7px] h-[5px] w-2.5"><path d="M0 0h10L5 5Z" fill="currentColor" /></svg>
        </header>
        <div className="flex min-h-0 flex-1">
          <Sidebar />
          <MainContent />
        </div>
      </div>
      <Popup />
      <Taskbar />
    </div>
  );
}
